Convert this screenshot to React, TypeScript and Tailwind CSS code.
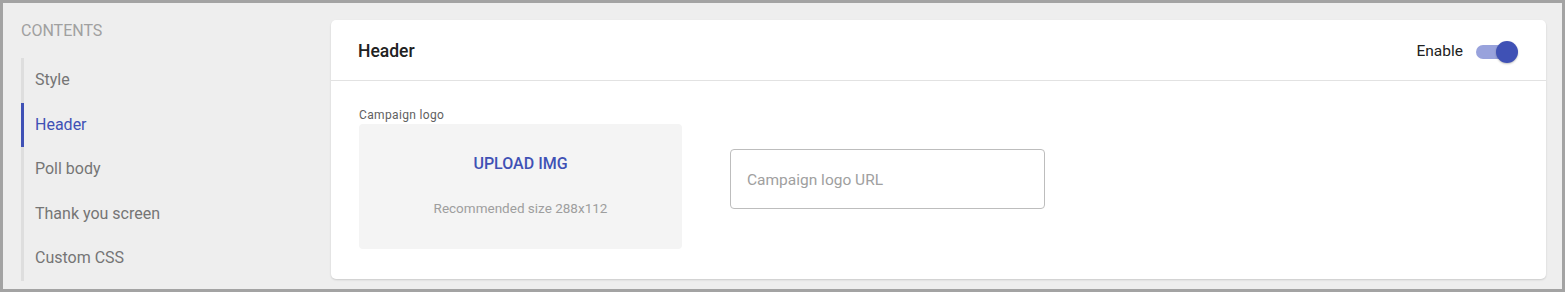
export default function App() {
  const items = ["Style", "Header", "Poll body", "Thank you screen", "Custom CSS"];
  return (
    <div
      className="w-[1565px] h-[292px] border-[3px] border-[#a3a3a3] bg-[#eeeeee] flex overflow-hidden"
      style={{ fontFamily: "Roboto, 'Noto Sans', sans-serif" }}
    >
      <div className="w-[328px] shrink-0 pl-[18px] pt-[19px]">
        <div className="text-[16px] leading-[18px] text-[#a0a0a0] uppercase">Contents</div>
        <div className="mt-[18px] border-l-[3px] border-[#dedede] relative">
          {items.map((it) => {
            const active = it === "Header";
            return (
              <div
                key={it}
                className={
                  "h-[44.5px] flex items-center pl-[11px] text-[16px] relative " +
                  (active ? "text-[#3f51b5]" : "text-[#757575]")
                }
              >
                {active && <div className="absolute left-[-3px] top-0 bottom-0 w-[3px] bg-[#3f51b5]" />}
                {it}
              </div>
            );
          })}
        </div>
      </div>
      <div className="flex-1 mt-[17px] mb-[10px] mr-[16px] bg-white rounded-[5px] shadow-[0_1px_2px_rgba(0,0,0,0.15)] flex flex-col">
        <div className="h-[61px] border-b border-[#e2e2e2] flex items-center justify-between pl-[27px] pr-[28px] pt-[3px]">
          <div className="text-[17.5px] font-medium text-[#212121]">Header</div>
          <div className="flex items-center gap-[13px]">
            <span className="text-[15.5px] text-[#212121]">Enable</span>
            <div className="relative w-[42px] h-[22px] flex items-center">
              <div className="w-[38px] h-[14px] rounded-full bg-[#98a2dc]" />
              <div className="absolute right-0 top-0 w-[22px] h-[22px] rounded-full bg-[#3f51b5] shadow-[0_1px_2px_rgba(0,0,0,0.25)]" />
            </div>
          </div>
        </div>
        <div className="flex pl-[28px] pt-[27px]">
          <div className="flex flex-col">
            <div className="text-[12px] leading-[15px] tracking-[0.35px] text-[#616161]">Campaign logo</div>
            <div className="mt-[1px] w-[323px] h-[125px] bg-[#f4f4f4] rounded-[4px] flex flex-col items-center">
              <div className="mt-[30px] text-[16px] leading-[20px] font-medium text-[#3f51b5]">UPLOAD IMG</div>
              <div className="mt-[26px] text-[13.5px] leading-[16px] text-[#9e9e9e]">Recommended size 288x112</div>
            </div>
          </div>
          <div className="ml-[48px] mt-[41px] w-[315px] h-[60px] border border-[#bdbdbd] rounded-[4px] flex items-center pl-[16px] pt-[3px]">
            <span className="text-[15.5px] text-[#a0a0a0]">Campaign logo URL</span>
          </div>
        </div>
      </div>
    </div>
  );
}
